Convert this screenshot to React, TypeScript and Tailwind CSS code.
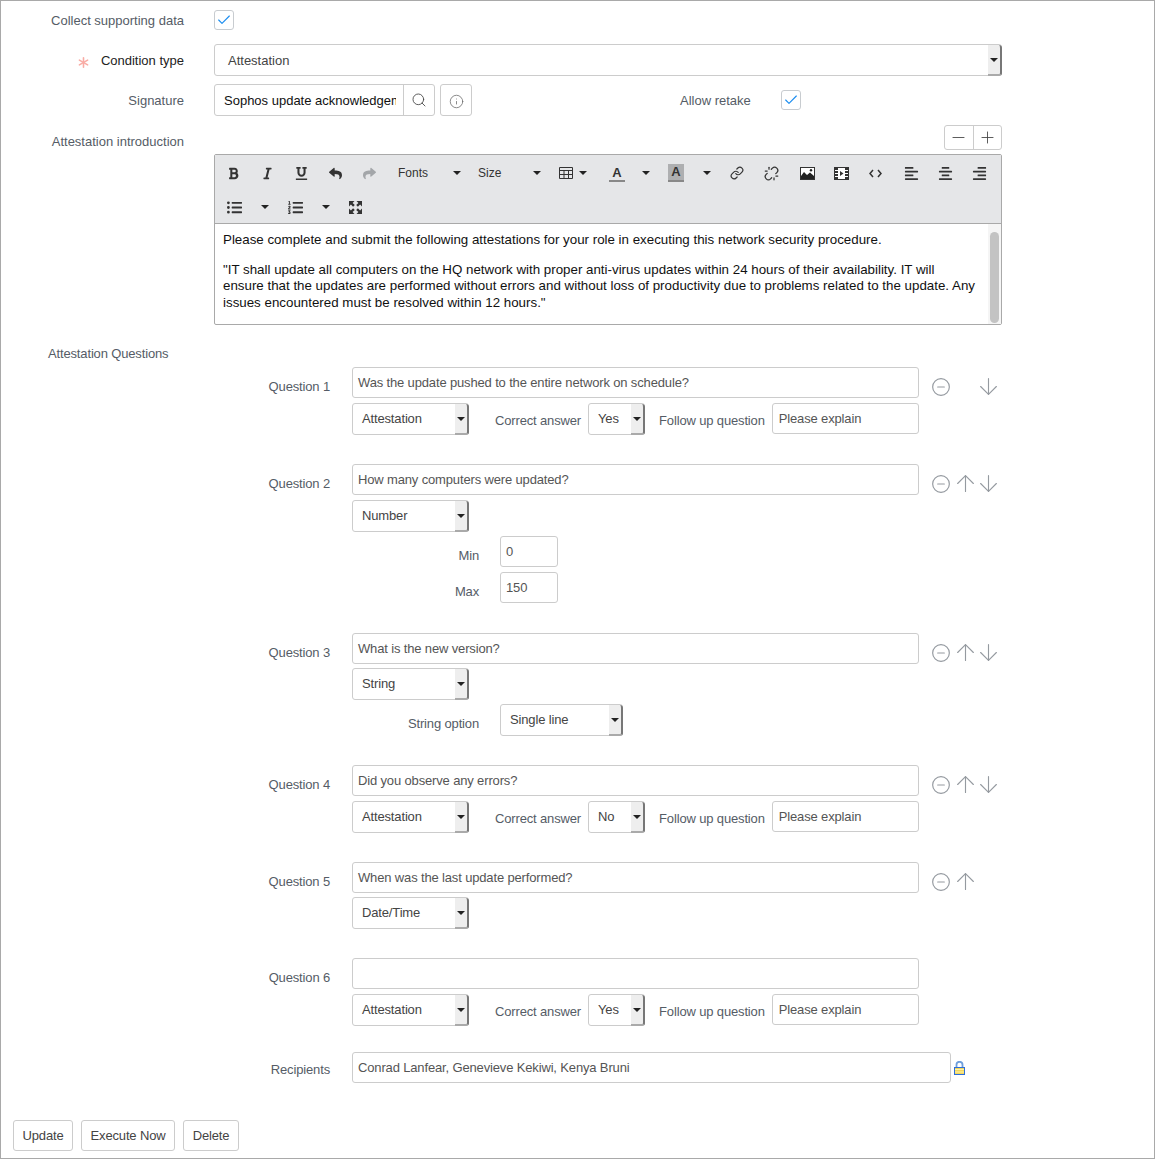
import { ReactNode } from 'react'
import { ArrowDown, ArrowUp, Asterisk, Check, CircleMinus, Info, Link, Minus, Plus, Search, Unlink } from 'lucide-react'
import {
  FaAlignCenter, FaAlignLeft, FaAlignRight, FaBold,
  FaItalic, FaListOl, FaListUl, FaReply, FaShare, FaUnderline,
} from 'react-icons/fa'

const Caret = ({ className = '' }: { className?: string }) => (
  <span className={`inline-block h-0 w-0 border-x-[4px] border-t-[4px] border-x-transparent border-t-[#222] ${className}`} />
)

const Checkbox = () => (
  <span className="flex size-5 items-center justify-center rounded-[3px] border border-[#c8ccd0] bg-white">
    <Check size={16} strokeWidth={1.7} className="text-[#1b8df0]" />
  </span>
)

const Arrow = () => (
  <span className="-mb-px -mr-px flex w-[14px] items-center justify-center rounded-br-[3px] rounded-tr-[3px] border-b-2 border-r-2 border-b-[#aaa] border-r-[#777] bg-[#eeeeee]">
    <Caret className="border-x-[3px] border-t-[3px]" />
  </span>
)

const Select = ({ value, width }: { value: string; width: string }) => (
  <div className={`flex h-8 shrink-0 rounded-[3px] border border-[#ccc] bg-white ${width}`}>
    <span className="flex-1 pl-[9px] pt-[5px] text-[13px] text-[#444]">{value}</span>
    <Arrow />
  </div>
)

const TextBox = ({ value, className }: { value: string; className: string }) => (
  <div className={`h-[31px] rounded-[3px] border border-[#ccc] bg-white pt-[5px] text-[13px] text-[#555] ${className}`}>
    {value}
  </div>
)

const Label = ({ children, className }: { children: ReactNode; className: string }) => (
  <span className={`shrink-0 text-right text-[13px] text-[#555c66] ${className}`}>{children}</span>
)

const Answer = ({ value }: { value: string }) => (
  <div className="flex h-8 items-start">
    <Select value="Attestation" width="w-[117px]" />
    <Label className="ml-[26px] mr-[7px] mt-[8px]">Correct answer</Label>
    <Select value={value} width="w-[57px]" />
    <Label className="ml-[14px] mr-[7px] mt-[8px]">Follow up question</Label>
    <TextBox value="Please explain" className="w-[147px] pl-[6px]" />
  </div>
)

const Question = ({ n, text, up, down, mt, children }: {
  n: number; text: string; up?: boolean; down?: boolean; mt: string; children: ReactNode
}) => (
  <div className={`flex ${mt}`}>
    <Label className="mr-[22px] mt-[10px] w-[329px]">Question {n}</Label>
    <div className="flex w-[567px] shrink-0 flex-col">
      <TextBox value={text} className="w-[567px] pl-[5px]" />
      {children}
    </div>
    <div className="ml-[12px] mt-[10px] flex h-5 items-center text-[#959aa0]">
      <CircleMinus size={20} strokeWidth={1.4} />
      <span className="-mt-[2px] ml-[4px] flex w-5 justify-center">{up && <ArrowUp size={27} strokeWidth={1} className="shrink-0" />}</span>
      <span className="-mt-[2px] ml-[3px] flex w-5 justify-center">{down && <ArrowDown size={27} strokeWidth={1} className="shrink-0" />}</span>
    </div>
  </div>
)

const Tool = ({ w, children, className = '' }: { w: string; children: ReactNode; className?: string }) => (
  <span className={`flex h-[32px] shrink-0 items-center justify-center ${w} ${className}`}>{children}</span>
)

const TableIcon = () => (
  <svg width="14" height="12" viewBox="0 0 14 12" fill="none" stroke="#333" strokeWidth="1">
    <path d="M.5.5h13v11H.5zM.5 3.500h13M.5 7.500h13M5 3.500v8M9.500 3.500v8" />
  </svg>
)

const ImageIcon = () => (
  <svg width="15" height="13" viewBox="0 0 15 13">
    <rect x="0.500" y="0.500" width="14" height="12" fill="#fff" stroke="#333" />
    <path d="M1 12V9l3-4 3 3 3-2.500L14 9v3z" fill="#222" />
    <circle cx="11" cy="3.200" r="1.200" fill="#222" />
  </svg>
)

const FilmIcon = () => (
  <svg width="15" height="13" viewBox="0 0 15 13">
    <rect x="0.500" y="0.500" width="14" height="12" fill="#fff" stroke="#333" />
    <path d="M1 1h3v11H1zM11 1h3v11h-3z" fill="#333" />
    <path d="M1 3.500h3M1 6.500h3M1 9.500h3M11 3.500h3M11 6.500h3M11 9.500h3" stroke="#fff" />
    <path d="M6 4l3.500 2.500L6 9z" fill="#333" />
  </svg>
)

const CodeIcon = () => (
  <svg width="13" height="9" viewBox="0 0 13 9" fill="none" stroke="#333" strokeWidth="1.500">
    <path d="M4 1L1 4.500 4 8M9 1l3 3.500L9 8" />
  </svg>
)

const ExpandIcon = () => (
  <svg width="15" height="15" viewBox="0 0 15 15" fill="#333">
    <path id="c" d="M1 1h5.500L4.600 2.900 6.800 5.100 5.100 6.800 2.900 4.600 1 6.500z" />
    <path d="M14 1H8.500l1.900 1.900-2.200 2.200 1.700 1.700 2.200-2.200L14 6.500z" />
    <path d="M1 14h5.500l-1.900-1.900 2.200-2.200-1.700-1.700-2.200 2.200L1 8.500z" />
    <path d="M14 14H8.500l1.900-1.900-2.200-2.200 1.700-1.700 2.200 2.200L14 8.500z" />
  </svg>
)

const Lock = () => (
  <svg width="11" height="14" viewBox="0 0 11 14" className="ml-[3px] mt-[9px]">
    <path d="M2.500 7V3.800a3 3 0 0 1 6 0V7" fill="none" stroke="#6f9fdc" strokeWidth="1.800" />
    <rect x="0.500" y="6.500" width="10" height="7" fill="#f2d65c" stroke="#2f6fd8" />
    <path d="M1 8.500h9M1 11h9" stroke="#fff3a8" strokeWidth="1.200" />
  </svg>
)

const Toolbar = () => (
  <div className="h-[69px] border-b border-[#a9a9a9] bg-[#e5e6e8] pl-[1px] text-[#333]">
    <div className="flex h-[36px] items-center">
      <Tool w="w-[34px]"><FaBold size={13} /></Tool>
      <Tool w="w-[34px]"><FaItalic size={13} /></Tool>
      <Tool w="w-[34px]"><FaUnderline size={13} /></Tool>
      <Tool w="w-[34px]"><FaReply size={13} /></Tool>
      <Tool w="w-[35px]"><FaShare size={13} className="text-[#a3a6a9]" /></Tool>
      <Tool w="w-[81px]" className="justify-start pl-[11px] text-[12px]">Fonts<Caret className="ml-[25px]" /></Tool>
      <Tool w="w-[79px]" className="justify-start pl-[10px] text-[12px]">Size<Caret className="ml-[32px]" /></Tool>
      <Tool w="w-[46px]" className="justify-start pl-[12px]"><TableIcon /><Caret className="ml-[6px]" /></Tool>
      <Tool w="w-[64px]" className="justify-start pl-[16px]">
        <span className="w-4 border-b-2 border-[#888] text-center text-[13px] font-bold leading-[15px]">A</span>
        <Caret className="ml-[17px]" />
      </Tool>
      <Tool w="w-[63px]" className="justify-start pl-[11px]">
        <span className="w-4 border-b-2 border-[#888] bg-[#aeafb1] text-center text-[13px] font-bold leading-[16px]">A</span>
        <Caret className="ml-[19px]" />
      </Tool>
      <Tool w="w-[34px]"><Link size={14} strokeWidth={2} /></Tool>
      <Tool w="w-[34px]"><Unlink size={15} strokeWidth={2} /></Tool>
      <Tool w="w-[34px]" className="ml-[2px]"><ImageIcon /></Tool>
      <Tool w="w-[34px]"><FilmIcon /></Tool>
      <Tool w="w-[34px]"><CodeIcon /></Tool>
      <Tool w="w-[34px]" className="ml-[2px]"><FaAlignLeft size={15} /></Tool>
      <Tool w="w-[34px]"><FaAlignCenter size={15} /></Tool>
      <Tool w="w-[34px]"><FaAlignRight size={15} /></Tool>
    </div>
    <div className="flex h-[32px] items-center">
      <Tool w="w-[37px]"><FaListUl size={15} /></Tool>
      <Tool w="w-[23px]"><Caret /></Tool>
      <Tool w="w-[39px]"><FaListOl size={15} /></Tool>
      <Tool w="w-[22px]"><Caret /></Tool>
      <Tool w="w-[36px]"><ExpandIcon /></Tool>
    </div>
  </div>
)

export default function App() {
  return (
    <div className="box-border h-[1159px] w-[1155px] overflow-hidden border border-[#a9a9a9] bg-white font-['Liberation_Sans',Arial,sans-serif]">
      <div className="mt-[9px] flex h-5 items-center">
        <Label className="mr-[30px] mt-[2px] w-[183px]">Collect supporting data</Label>
        <Checkbox />
      </div>

      <div className="mt-[14px] flex h-8 items-center">
        <span className="mr-[30px] mt-[2px] flex w-[183px] shrink-0 items-center justify-end text-[13px] text-[#222]">
          <Asterisk size={19} strokeWidth={2} className="mr-[8px] mt-[3px] text-[#f9aca5]" />
          Condition type
        </span>
        <div className="flex h-8 w-[788px] rounded-[3px] border border-[#ccc]">
          <span className="flex-1 pl-[13px] pt-[6px] text-[13px] text-[#444]">Attestation</span>
          <Arrow />
        </div>
      </div>

      <div className="mt-[8px] flex h-8 items-center">
        <Label className="mr-[30px] mt-[2px] w-[183px]">Signature</Label>
        <div className="flex h-8 w-[221px] rounded-[3px] border border-[#ccc]">
          <span className="w-[189px] border-r border-[#ccc] pl-[9px] pr-[7px] pt-[6px] text-[13px] text-[#111]">
            <span className="block overflow-hidden whitespace-nowrap">Sophos update acknowledgement</span>
          </span>
          <span className="flex flex-1 items-center justify-center text-[#444]"><Search size={16} strokeWidth={1.300} className="-ml-px" /></span>
        </div>
        <span className="ml-[5px] flex size-8 items-center justify-center rounded-[3px] border border-[#ccc] text-[#666]">
          <Info size={15} strokeWidth={1.200} className="mt-[2px]" />
        </span>
        <Label className="ml-[208px] mr-[30px] mt-[2px]">Allow retake</Label>
        <Checkbox />
      </div>

      <div className="mt-[9px] flex h-[25px]">
        <Label className="mr-[30px] mt-[7px] w-[183px]">Attestation introduction</Label>
        <div className="ml-[730px] flex h-[25px] w-[58px] rounded-[3px] border border-[#ccc] text-[#444]">
          <span className="flex flex-1 items-center justify-center border-r border-[#ccc]"><Minus size={19} strokeWidth={1.100} /></span>
          <span className="flex flex-1 items-center justify-center"><Plus size={19} strokeWidth={1.100} /></span>
        </div>
      </div>

      <div className="ml-[213px] mt-[4px] h-[171px] w-[788px] rounded-[2px] border border-[#a9a9a9]">
        <Toolbar />
        <div className="flex h-[100px]">
          <div className="flex-1 pl-2 pr-[10px] pt-[8px] text-[13.330px] leading-[16.500px] text-[#111]">
            <p>Please complete and submit the following attestations for your role in executing this network security procedure.</p>
            <p className="mt-[13px]">
              "IT shall update all computers on the HQ network with proper anti-virus updates within 24 hours of their availability. IT will ensure that the updates are performed without errors and without loss of productivity due to problems related to the update. Any issues encountered must be resolved within 12 hours."
            </p>
          </div>
          <div className="w-[13px] bg-[#f5f5f5] px-[2px] pt-[8px]">
            <div className="h-[91px] rounded-[5px] bg-[#c3c3c3]" />
          </div>
        </div>
      </div>

      <div className="tracking-[-0.15px]">
        <div className="ml-[47px] mt-[21px] h-[16px] text-[13px] leading-[16px] text-[#555c66]">Attestation Questions</div>

        <Question n={1} text="Was the update pushed to the entire network on schedule?" down mt="mt-[5px]">
          <div className="mt-[5px]"><Answer value="Yes" /></div>
        </Question>

        <Question n={2} text="How many computers were updated?" up down mt="mt-[29px]">
          <div className="mt-[5px]"><Select value="Number" width="w-[117px]" /></div>
          <div className="mt-[4px] flex h-[31px]">
            <Label className="mr-[21px] mt-[10px] w-[127px]">Min</Label>
            <TextBox value="0" className="w-[58px] pl-[5px]" />
          </div>
          <div className="mt-[5px] flex h-[31px]">
            <Label className="mr-[21px] mt-[10px] w-[127px]">Max</Label>
            <TextBox value="150" className="w-[58px] pl-[5px]" />
          </div>
        </Question>

        <Question n={3} text="What is the new version?" up down mt="mt-[30px]">
          <div className="mt-[4px]"><Select value="String" width="w-[117px]" /></div>
          <div className="mt-[4px] flex h-8">
            <Label className="mr-[21px] mt-[10px] w-[127px]">String option</Label>
            <Select value="Single line" width="w-[123px]" />
          </div>
        </Question>

        <Question n={4} text="Did you observe any errors?" up down mt="mt-[29px]">
          <div className="mt-[5px]"><Answer value="No" /></div>
        </Question>

        <Question n={5} text="When was the last update performed?" up mt="mt-[29px]">
          <div className="mt-[4px]"><Select value="Date/Time" width="w-[117px]" /></div>
        </Question>

        <div className="mt-[29px] flex">
          <Label className="mr-[22px] mt-[10px] w-[329px]">Question 6</Label>
          <div className="flex w-[567px] shrink-0 flex-col">
            <TextBox value="" className="w-[567px] pl-[5px]" />
            <div className="mt-[5px]"><Answer value="Yes" /></div>
          </div>
        </div>

        <div className="mt-[26px] flex">
          <Label className="mr-[22px] mt-[8px] w-[329px]">Recipients</Label>
          <TextBox value="Conrad Lanfear, Genevieve Kekiwi, Kenya Bruni" className="w-[599px] pl-[5px]" />
          <Lock />
        </div>

        <div className="ml-[12px] mt-[37px] flex gap-2 text-[13px] text-[#444]">
          <span className="flex h-[31px] w-[60px] items-center justify-center rounded-[3px] border border-[#ccc]">Update</span>
          <span className="flex h-[31px] w-[94px] items-center justify-center rounded-[3px] border border-[#ccc]">Execute Now</span>
          <span className="flex h-[31px] w-[56px] items-center justify-center rounded-[3px] border border-[#ccc]">Delete</span>
        </div>
      </div>
    </div>
  )
}
